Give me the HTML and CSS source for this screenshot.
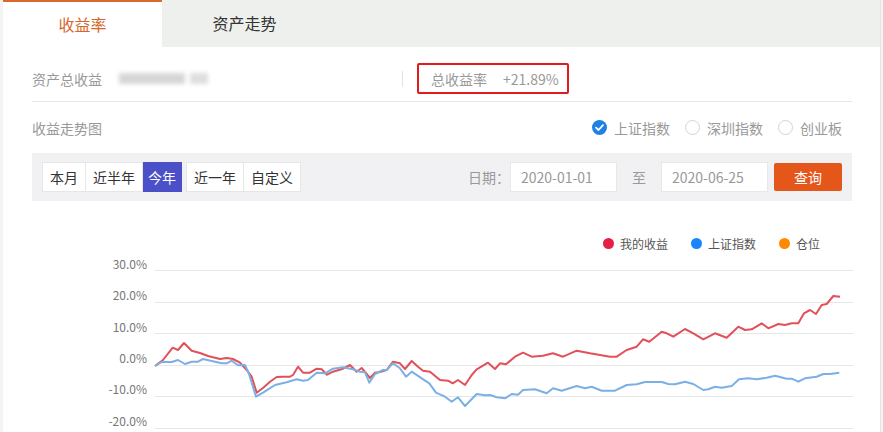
FILE: index.html
```html
<!DOCTYPE html>
<html lang="zh-CN">
<head>
<meta charset="utf-8">
<title>收益率</title>
<link rel="stylesheet" href="styles.css">
</head>
<body>
<div class="panel">
  <div class="tabs">
    <div class="tab tab-active">收益率</div>
    <div class="tab">资产走势</div>
  </div>
  <div class="content">
    <div class="summary">
      <div class="summary-left">
        <span class="label">资产总收益</span>
        <span class="blur-value"><span class="blur-a"></span><span class="blur-b"></span></span>
      </div>
      <div class="sep"></div>
      <div class="rate-box"><span>总收益率</span><span class="rate">+21.89%</span></div>
    </div>

    <div class="trend-head">
      <span class="label">收益走势图</span>
      <div class="radios">
        <span class="radio"><span class="circle circle-checked"><svg viewBox="0 0 15 15" width="15" height="15"><path d="M4 7.6 L6.5 10 L11 5.2" fill="none" stroke="#fff" stroke-width="1.8" stroke-linecap="round" stroke-linejoin="round"/></svg></span>上证指数</span>
        <span class="radio"><span class="circle"></span>深圳指数</span>
        <span class="radio"><span class="circle"></span>创业板</span>
      </div>
    </div>

    <div class="toolbar">
      <div class="ranges">
        <span class="range">本月</span>
        <span class="range">近半年</span>
        <span class="range range-active">今年</span>
        <span class="range">近一年</span>
        <span class="range">自定义</span>
      </div>
      <div class="dates">
        <span class="date-label">日期：</span>
        <span class="date-input">2020-01-01</span>
        <span class="to">至</span>
        <span class="date-input">2020-06-25</span>
        <span class="btn-query">查询</span>
      </div>
    </div>

    <div class="legend">
      <span class="legend-item"><span class="ldot ldot-red"></span>我的收益</span>
      <span class="legend-item"><span class="ldot ldot-blue"></span>上证指数</span>
      <span class="legend-item"><span class="ldot ldot-orange"></span>仓位</span>
    </div>

    <svg class="chart" width="821" height="180" viewBox="32 253 821 180">
      <g class="grid">
        <line x1="155" y1="270.5" x2="853" y2="270.5"/>
        <line x1="155" y1="302.5" x2="853" y2="302.5"/>
        <line x1="155" y1="333.5" x2="853" y2="333.5"/>
        <line x1="155" y1="365.5" x2="853" y2="365.5"/>
        <line x1="155" y1="396.5" x2="853" y2="396.5"/>
        <line x1="155" y1="428.5" x2="853" y2="428.5"/>
      </g>
      <g class="axis">
        <text x="147" y="269">30.0%</text>
        <text x="147" y="300">20.0%</text>
        <text x="147" y="332">10.0%</text>
        <text x="147" y="363">0.0%</text>
        <text x="147" y="394">-10.0%</text>
        <text x="147" y="426">-20.0%</text>
      </g>
      <polyline class="line-red" points="155,366 163,360 172.7,347.7 178,350 184,343 191.7,350.7 200,353 208,356 220,359 226.7,358 233,359 240,362.7 246.7,370 251.7,376.7 256.7,392.7 263,388 270,381.7 276.7,377 283,376.7 290,376.7 293,375 298,366.7 303,372.7 310,372.7 316.7,368.7 321.7,369.3 327,374.7 333,371.7 343,368.7 350,365 356.7,371.7 361.7,368 370,378 375,372.7 380,372 386.7,370 393,361.7 400,363.3 405,369 411.7,361 418,366.7 423,370.7 430,371.7 440,380 448,380.7 452.7,383.3 458,380 465,385 471.7,375 476.7,369.3 488,362.7 495,369 500,363.3 506,364.3 515,356.7 523,352.7 531.7,356.7 543,355.7 553,353.3 563,356.7 576.7,350.7 590,353.3 600,355 610,356.7 616.7,356.7 626.7,350 636.7,346.7 643,339.3 649.3,341.7 661.7,331.7 666.7,333.3 673.3,336.7 685,329 693.3,333.3 703.3,339.3 715,333.3 726.7,337.7 738.3,326.7 745,330 751.7,329.3 761.7,323.3 768.3,328.3 778.3,324 785,325 791.7,323.3 798.3,323.3 804,313.3 810,310 816,314 821.7,305 826.7,304 833.3,296 840,296.7"/>
      <polyline class="line-blue" points="155,366 161.7,362 171.7,362 178,360 185,364 191.7,361.7 198,361.7 203,359 211.7,361 221.7,363.3 226.7,363.3 231.7,360.7 238,365.3 245,365 249,374 256,396.7 263,392.7 275,385 286.7,382.3 296.7,379.3 303,380.7 308,380 316.7,372.7 325,373.3 333,368.7 343,367.3 353,369.3 360,371.7 365,372.3 369.3,382.7 375,374 383,370 386.7,370 393,363.3 400,368.3 406,376.7 411.7,371.7 421.7,378.3 429.3,383.3 436,392.7 445,396.7 451.7,401.7 458,397.3 465,406 476.7,394 485,395.3 490,395 496.7,397.3 505,398.3 511.7,394 518,394.7 523,390 535,389.3 546.7,393.3 553,388.3 561.7,390.7 576.7,386 585,388.3 591.7,386.7 601.7,390.7 615,390.7 626.7,385 636.7,384.3 645,382 661.7,382 668.3,384 675,384.3 685,381.7 693.3,384 703.3,390 708.3,389.3 715,386.7 721.7,387.7 731.7,386 739,379.3 748.3,378.3 756.7,379.3 766.7,377.7 775,375.7 786.7,378.7 791.7,378.7 798.3,381.7 805,378.3 816.7,376.7 823.3,374 830,374 839.3,372.7"/>
    </svg>
  </div>
</div>
</body>
</html>
```

FILE: styles.css
```css
* { box-sizing: border-box; }

html, body {
  margin: 0;
  padding: 0;
  background: #f4f4f4;
}

body {
  font-family: "Noto Sans CJK SC", "Noto Sans", "Liberation Sans", sans-serif;
  font-size: 14px;
  color: #333;
}

.panel {
  margin-left: 3px;
  width: 878px;
  min-height: 432px;
  background: #fff;
  border-right: 1px solid #e4e4e4;
}

/* tabs */
.tabs {
  display: flex;
  height: 47px;
  background: #eef0ee;
}

.tab {
  width: 165px;
  text-align: center;
  font-size: 16px;
  line-height: 47px;
  color: #333;
}

.tab-active {
  width: 159px;
  background: #fff;
  color: #d5672c;
  border-top: 2px solid #d9692f;
  line-height: 44px;
}

.content {
  padding: 0 28px 0 29px;
}

/* summary row */
.summary {
  display: flex;
  align-items: center;
  padding: 16px 0 7px;
  border-bottom: 1px solid #e6e6e6;
}

.summary-left {
  width: 370px;
  display: flex;
  align-items: center;
}

.label {
  color: #999;
  font-size: 14px;
  line-height: 20px;
}

.blur-value {
  display: flex;
  align-items: center;
  gap: 5px;
  margin-left: 17px;
}

.blur-a, .blur-b {
  display: block;
  height: 11px;
  background: #d6d6d6;
  filter: blur(2px);
}

.blur-a { width: 66px; }
.blur-b { width: 18px; background: #dedede; }

.sep {
  width: 1px;
  height: 16px;
  background: #e2e2e2;
}

.rate-box {
  display: flex;
  align-items: center;
  gap: 16px;
  margin-left: 14px;
  height: 31px;
  padding: 0 8px 0 12px;
  border: 2px solid #e11a1d;
  border-radius: 2px;
  color: #999;
  font-size: 14px;
}

/* trend head */
.trend-head {
  display: flex;
  align-items: center;
  justify-content: space-between;
  height: 51px;
}

.radios {
  display: flex;
  align-items: center;
  gap: 15px;
  padding-right: 10px;
}

.radio {
  display: flex;
  align-items: center;
  gap: 7px;
  color: #999;
  font-size: 14px;
  line-height: 20px;
}

.circle {
  display: block;
  width: 15px;
  height: 15px;
  border-radius: 50%;
  border: 1px solid #d4d4d4;
  background: #fff;
}

.circle-checked {
  border: none;
  background: #1f80e6;
}

.circle-checked svg { display: block; }

/* toolbar */
.toolbar {
  display: flex;
  align-items: center;
  justify-content: space-between;
  background: #f1f0f3;
  padding: 9px 10px;
}

.ranges {
  display: flex;
}

.range {
  height: 30px;
  line-height: 28px;
  padding: 0 7px;
  background: #fff;
  border: 1px solid #e6e6e6;
  color: #333;
  font-size: 14px;
}

.range + .range { border-left: none; }

.range-active {
  width: 39px;
  text-align: center;
  background: #4b4fc8;
  border-color: #4b4fc8;
  color: #fff;
  padding: 0;
  margin-right: 4px;
}

.range-active + .range { border-left: 1px solid #e6e6e6; }

.dates {
  display: flex;
  align-items: center;
}

.date-label {
  color: #999;
  margin-right: 0;
}

.date-input {
  width: 107px;
  height: 30px;
  line-height: 28px;
  padding-left: 10px;
  background: #fff;
  border: 1px solid #e8e8e8;
  color: #999;
  font-size: 14px;
}

.to {
  color: #999;
  margin: 0 15px;
}

.btn-query {
  margin-left: 6px;
  width: 68px;
  height: 28px;
  line-height: 28px;
  text-align: center;
  background: #e5561b;
  color: #fff;
  border-radius: 2px;
  font-size: 14px;
}

/* legend */
.legend {
  display: flex;
  justify-content: flex-end;
  align-items: center;
  gap: 23px;
  margin-top: 32px;
  height: 20px;
  padding-right: 32px;
}

.legend-item {
  display: flex;
  align-items: center;
  gap: 6px;
  font-size: 12px;
  color: #555;
}

.ldot {
  display: block;
  width: 11px;
  height: 11px;
  border-radius: 50%;
}

.ldot-red { background: #e61f45; }
.ldot-blue { background: #1a84ff; }
.ldot-orange { background: #ff8a00; }

/* chart */
.chart {
  display: block;
  overflow: visible;
}

.grid line {
  stroke: #e6e6e6;
  stroke-width: 1;
}

.axis text {
  font-size: 12px;
  fill: #777;
  text-anchor: end;
  font-family: "Noto Sans CJK SC", "Noto Sans", sans-serif;
}

.line-red, .line-blue {
  fill: none;
  stroke-width: 2;
  stroke-linejoin: round;
}

.line-red { stroke: #e2505a; }
.line-blue { stroke: #7ab0e4; }
```
